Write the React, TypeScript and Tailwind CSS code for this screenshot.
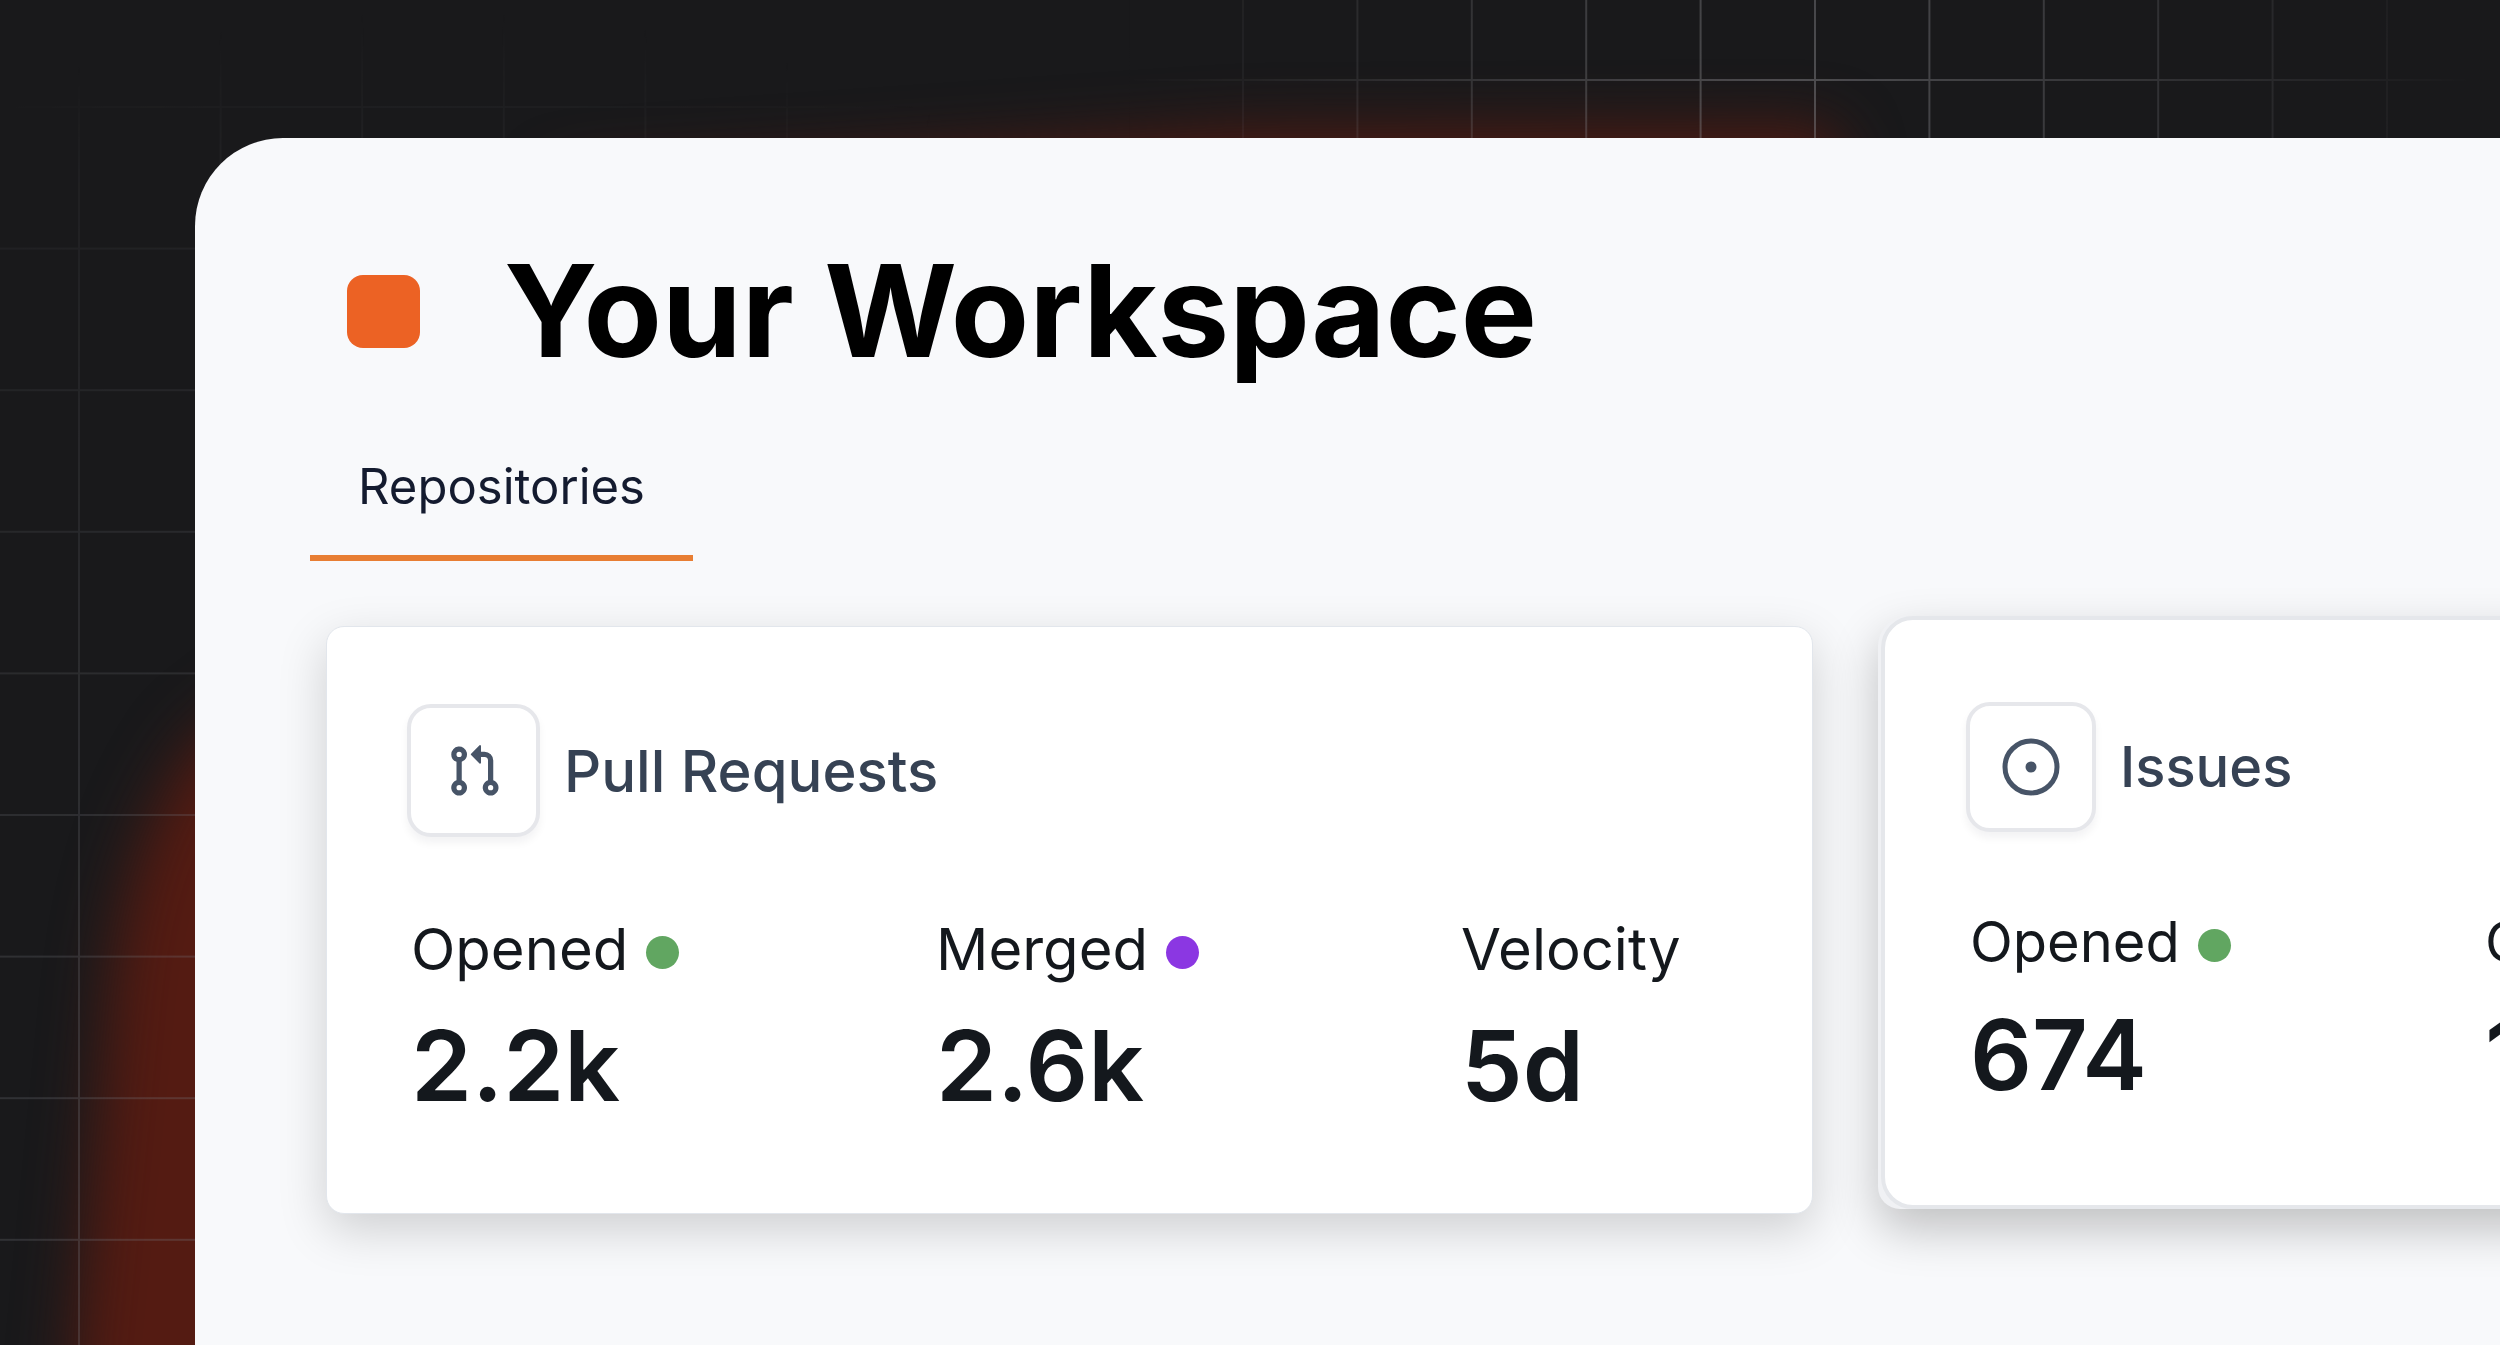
import type { ReactNode } from "react";

type Stat = { label: string; value: string; dot?: string };

function Backdrop() {
  return (
    <svg aria-hidden="true" className="pointer-events-none absolute inset-0 h-full w-full">
      <defs>
        <pattern id="gridLeft" x="78" y="106" width="141.6" height="141.6" patternUnits="userSpaceOnUse">
          <path d="M0 1H141.6M1 0V141.6" stroke="#75787f" strokeWidth="2" fill="none" />
        </pattern>
        <pattern id="gridRight" x="1814" y="79" width="114.4" height="114.4" patternUnits="userSpaceOnUse">
          <path d="M0 1H114.4M1 0V114.4" stroke="#8b8b90" strokeWidth="2" fill="none" />
        </pattern>
        <radialGradient id="fadeLeft" gradientUnits="userSpaceOnUse" cx="440" cy="1250" r="1240">
          <stop offset="0" stopColor="#fff" stopOpacity="0.36" />
          <stop offset="0.3" stopColor="#fff" stopOpacity="0.28" />
          <stop offset="0.9" stopColor="#fff" stopOpacity="0.08" />
          <stop offset="1" stopColor="#fff" stopOpacity="0" />
        </radialGradient>
        <radialGradient id="fadeRight" gradientUnits="userSpaceOnUse" cx="1800" cy="80" r="680">
          <stop offset="0" stopColor="#fff" stopOpacity="0.46" />
          <stop offset="1" stopColor="#fff" stopOpacity="0" />
        </radialGradient>
        <mask id="maskLeft" maskUnits="userSpaceOnUse" x="0" y="0" width="1000" height="2000">
          <rect width="1000" height="2000" fill="url(#fadeLeft)" />
        </mask>
        <mask id="maskRight" maskUnits="userSpaceOnUse" x="1100" y="0" width="1400" height="400">
          <rect x="1100" width="1400" height="400" fill="url(#fadeRight)" />
        </mask>
        <filter id="soft" filterUnits="userSpaceOnUse" x="-200" y="-200" width="2700" height="2000" colorInterpolationFilters="sRGB">
          <feGaussianBlur stdDeviation="30" />
        </filter>
      </defs>
      <g filter="url(#soft)" fill="#541b12">
        <path d="M560 180 L1250 134 L1830 130 L1900 400 L560 400Z" />
        <path d="M330 640 L200 740 Q124 840 110 1000 L76 1345 L70 1500 H600 V640Z" />
      </g>
      <rect width="1000" height="2000" fill="url(#gridLeft)" mask="url(#maskLeft)" />
      <rect x="1100" width="1400" height="400" fill="url(#gridRight)" mask="url(#maskRight)" />
    </svg>
  );
}

function PullRequestIcon() {
  return (
    <svg aria-hidden="true" viewBox="0 0 16 16" className="size-[56px] fill-[#475467]">
      <path d="M7.177 3.073 9.573.677A.25.25 0 0 1 10 .854v4.792a.25.25 0 0 1-.427.177L7.177 3.427a.25.25 0 0 1 0-.354ZM3.75 2.5a.75.75 0 1 0 0 1.5.75.75 0 0 0 0-1.5Zm-2.25.75a2.25 2.25 0 1 1 3 2.122v5.256a2.251 2.251 0 1 1-1.5 0V5.372A2.25 2.25 0 0 1 1.5 3.25ZM11 2.5h-1V4h1a1 1 0 0 1 1 1v5.628a2.251 2.251 0 1 0 1.5 0V5A2.5 2.5 0 0 0 11 2.5Zm1 10.25a.75.75 0 1 1 1.5 0 .75.75 0 0 1-1.5 0ZM3.75 12a.75.75 0 1 0 0 1.5.75.75 0 0 0 0-1.5Z" />
    </svg>
  );
}

function IssueIcon() {
  return (
    <svg aria-hidden="true" viewBox="0 0 58 58" className="size-[58px]">
      <circle cx="29" cy="29" r="26" fill="none" stroke="#475467" strokeWidth="5" />
      <circle cx="29" cy="29" r="5.5" fill="#475467" />
    </svg>
  );
}

function StatItem({ stat, small }: { stat: Stat; small?: boolean }) {
  return (
    <div className={small ? "w-[515px] shrink-0" : "w-[525px] shrink-0"}>
      <dt className={(small ? "text-[56px]" : "text-[58px]") + " flex items-center gap-[18px] leading-[74px]"}>
        {stat.label}
        {stat.dot && <span className={"mt-[6px] size-[33px] rounded-full " + stat.dot} />}
      </dt>
      <dd className={(small ? "mt-4 text-[97px]" : "mt-5 text-[98px]") + " leading-[120px] font-semibold"}>{stat.value}</dd>
    </div>
  );
}

function CardHeading({ icon, title, small }: { icon: ReactNode; title: string; small?: boolean }) {
  return (
    <div className="flex items-center gap-6">
      <div className={(small ? "size-[130px]" : "size-[133px]") + " flex shrink-0 items-center justify-center rounded-[24px] border-4 border-[#e6e7eb] bg-white shadow-[0_6px_8px_rgba(16,24,40,0.05)]"}>
        {icon}
      </div>
      <h2 className={(small ? "text-[56px]" : "text-[58px]") + " leading-[72px] font-medium text-[#364254]"}>{title}</h2>
    </div>
  );
}

export default function App() {
  const pulls: Stat[] = [
    { label: "Opened", value: "2.2k", dot: "bg-[#61a661]" },
    { label: "Merged", value: "2.6k", dot: "bg-[#8b37e2]" },
    { label: "Velocity", value: "5d" },
  ];
  const issues: Stat[] = [
    { label: "Opened", value: "674", dot: "bg-[#61a661]" },
    { label: "Closed", value: "1.1k", dot: "bg-[#8b37e2]" },
  ];
  return (
    <div className="relative flex min-h-screen overflow-hidden bg-[#19191b] pt-[138px] pl-[195px] font-['Inter',sans-serif]">
      <Backdrop />
      <main className="relative min-w-0 flex-1 overflow-hidden rounded-tl-[88px] bg-[#f8f9fb] pl-[115px]">
        <header className="flex items-center gap-[84px] pt-[93px] pl-[37px]">
          <span className="size-[73px] rounded-[16px] bg-[#ec6224]" />
          <h1 className="text-[128px] leading-[160px] font-bold text-black">Your Workspace</h1>
        </header>
        <nav className="mt-[56px] flex">
          <a href="#repositories" className="block w-[383px] border-b-[6px] border-[#e87e33] px-12 pb-[28px] text-[49px] leading-[80px] text-[#141b2f]">
            Repositories
          </a>
        </nav>
        <div className="mt-[55px] flex items-start gap-[65px] pl-4">
          <section className="mt-[10px] h-[588px] w-[1487px] shrink-0 rounded-[18px] border border-[#e2e6ec] bg-white pt-[77px] pl-[80px] text-[#14181d] shadow-[0_16px_48px_rgba(0,0,0,0.17)]">
            <CardHeading icon={<PullRequestIcon />} title="Pull Requests" />
            <dl className="mt-[75px] flex pl-1">
              {pulls.map((s) => <StatItem key={s.label} stat={s} />)}
            </dl>
          </section>
          <section className="h-[593px] w-[1487px] shrink-0 rounded-[30px] rounded-bl-[22px] bg-[#f0f1f4] pl-[3px] shadow-[0_20px_48px_rgba(0,0,0,0.23)]">
            <div className="h-full rounded-[32px] border-4 border-[#e5e7eb] bg-white pt-[82px] pl-[81px] text-[#14181d]">
              <CardHeading icon={<IssueIcon />} title="Issues" small />
              <dl className="mt-[73px] flex pl-1">
                {issues.map((s) => <StatItem key={s.label} stat={s} small />)}
              </dl>
            </div>
          </section>
        </div>
      </main>
    </div>
  );
}
